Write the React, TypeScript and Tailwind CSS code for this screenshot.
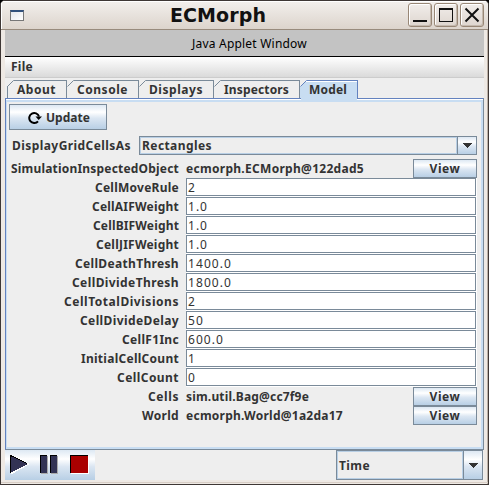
import { useLayoutEffect, useRef, useState } from "react";
import type { ReactNode } from "react";

const metal = "bg-[linear-gradient(to_bottom,#dde8f3_0%,#ffffff_30%,#dbe6f2_55%,#b8cfe5_100%)]";

/* Caption whose letter spacing is adjusted so that it fills a given width. */
function Caption({ text, width, className = "" }: { text: string; width: number; className?: string }) {
  const ref = useRef<HTMLSpanElement>(null);
  const [spacing, setSpacing] = useState(0);
  useLayoutEffect(() => {
    if (!ref.current) return;
    const natural = ref.current.getBoundingClientRect().width;
    setSpacing((width - natural) / text.length);
  }, [text, width]);
  return (
    <span ref={ref} style={{ letterSpacing: spacing }} className={`inline-block shrink-0 whitespace-pre ${className}`}>
      {text}
    </span>
  );
}

function WindowButton({ children }: { children: ReactNode }) {
  return (
    <div className="h-6 w-6 rounded-[3px] border border-[#988776] bg-gradient-to-b from-[#f1edea] to-[#ded6cf] shadow-[inset_1px_1px_0_#fff,inset_-1px_-1px_0_#c4b9ae]">
      <svg width="22" height="22" viewBox="0 0 22 22" fill="none" stroke="#111" shapeRendering="crispEdges">
        {children}
      </svg>
    </div>
  );
}

function Tab({ text, width, box, active = false }: { text: string; width: number; box: string; active?: boolean }) {
  return (
    <div
      className={`relative flex h-[18px] items-center border-t border-r ${box} ${
        active
          ? "border-[#6382bf] bg-[#c8ddf2] pl-[9px] shadow-[inset_0_1px_0_#fff]"
          : "border-[#7a8a99] pl-[10px]"
      }`}
    >
      <svg className="absolute -top-px left-0" width="7" height="18" viewBox="0 0 7 18">
        <path d="M0 0H7L0 7Z" fill="#eee" />
        <path d="M0.5 6.5L6.5 0.5" stroke={active ? "#6382bf" : "#7a8a99"} />
        {text === "About" && <path d="M0.5 6V18" stroke="#7a8a99" />}
      </svg>
      <Caption text={text} width={width} />
    </div>
  );
}

function Arrow() {
  return (
    <svg width="10" height="5" viewBox="0 0 10 5" shapeRendering="crispEdges">
      <path d="M0 0H10L5 5Z" fill="#333" />
    </svg>
  );
}

function Combo({ text, width, box }: { text: string; width: number; box: string }) {
  return (
    <div className={`flex border border-[#7a8a99] ${box}`}>
      <div className="flex grow items-center border border-[#b8cfe5] pl-[1px]">
        <Caption text={text} width={width} className="pt-px" />
      </div>
      <div className={`flex w-[19px] items-center justify-center border-l border-[#7a8a99] ${metal}`}>
        <Arrow />
      </div>
    </div>
  );
}

function ViewButton() {
  return (
    <div className={`flex h-[19px] w-16 items-center justify-center border border-[#7a8a99] ${metal}`}>
      <Caption text="View" width={31} />
    </div>
  );
}

function Row({ label, width, children }: { label: string; width: number; children: ReactNode }) {
  return (
    <div className="flex h-[19px] items-center">
      <div className="flex w-[173px] shrink-0 justify-end">
        <Caption text={label} width={width} />
      </div>
      <div className="ml-[7px] flex w-[291px] items-center justify-between">{children}</div>
    </div>
  );
}

const fields: [string, number, string, number][] = [
  ["CellMoveRule", 84, "2", 7],
  ["CellAIFWeight", 87, "1.0", 20],
  ["CellBIFWeight", 86, "1.0", 20],
  ["CellJIFWeight", 83, "1.0", 20],
  ["CellDeathThresh", 104, "1400.0", 44],
  ["CellDivideThresh", 107, "1800.0", 44],
  ["CellTotalDivisions", 115, "2", 7],
  ["CellDivideDelay", 99, "50", 16],
  ["CellF1Inc", 57, "600.0", 36],
  ["InitialCellCount", 98, "1", 7],
  ["CellCount", 62, "0", 7],
];

export default function App() {
  return (
    <div className="h-[485px] w-[489px] bg-black font-['Noto_Sans',sans-serif] text-[12px] leading-[16px] font-bold text-[#333]">
      <div className="flex h-full w-full flex-col overflow-hidden rounded-t-[5px] border border-[#3e3735] bg-[#eee9e4] shadow-[inset_-1px_0_0_#bcb0a5]">
        <div className="flex h-[29px] shrink-0 items-center border-b border-[#988b7d] bg-gradient-to-b from-[#f3f0ed] to-[#dcd4cc] shadow-[inset_1px_1px_0_#fff]">
          <div className="ml-[9px] h-[11px] w-[14px] border border-t-2 border-[#777] border-t-[#31517c] bg-gradient-to-br from-[#e5e8ec] to-white" />
          <div className="ml-[146px] grow font-['DejaVu_Sans',sans-serif] text-[19px] leading-[26px] text-[#111]">
            <Caption text="ECMorph" width={96} />
          </div>
          <div className="mr-[4px] flex gap-[2px]">
            <WindowButton>
              <path d="M4 17H18" strokeWidth="2" />
            </WindowButton>
            <WindowButton>
              <path d="M4.5 4V18M17.5 4V18M4 17.5H18" />
              <path d="M4 5H18" strokeWidth="2" />
            </WindowButton>
            <WindowButton>
              <path d="M4.5 4.5L17.5 17.5M17.5 4.5L4.5 17.5" strokeWidth="2" shapeRendering="auto" />
            </WindowButton>
          </div>
        </div>

        <div className="ml-1 flex h-[450px] w-[479px] flex-col bg-[#eee]">
          <div className="flex h-[27px] shrink-0 items-center border-b border-black bg-[#c3c3c3] pl-[187px] font-normal text-black">
            <Caption text="Java Applet Window" width={115} className="pt-px" />
          </div>
          <div className="flex h-[21px] shrink-0 items-center border-b border-[#ccc] bg-gradient-to-b from-white to-[#dadada] pl-[6px]">
            <Caption text="File" width={22} />
          </div>

          <div className="flex h-5 shrink-0 items-end pl-[2px]">
            <Tab text="About" width={39} box="w-[60px]" />
            <Tab text="Console" width={51} box="w-[72px]" />
            <Tab text="Displays" width={54} box="w-[75px]" />
            <Tab text="Inspectors" width={65} box="w-[86px]" />
            <Tab text="Model" width={38} box="w-[58px]" active />
          </div>

          <div className="relative h-[352px] shrink-0 border border-[#7a8a99] border-t-[#6382bf] border-l-[#6382bf]">
            <div className="absolute -top-px left-[295px] h-[2px] w-[56px] bg-[#c8ddf2]" />
            <div className="h-full border-t border-white">
              <div className="h-full border-2 border-l border-[#c8ddf2] pt-[2px] pl-[2px]">
                <div className={`flex h-[26px] w-[98px] items-center border border-[#7a8a99] pl-[18px] ${metal}`}>
                  <svg width="14" height="13" viewBox="0 0 14 13" fill="none">
                    <path d="M10 10.3A5 5 0 1 1 11 5.5" stroke="#000" strokeWidth="2" />
                    <path d="M7.5 5.5H14L10.7 9Z" fill="#000" />
                  </svg>
                  <Caption text="Update" width={44} className="ml-[4px] pt-px" />
                </div>
                <div className="mt-[6px] flex h-[19px] items-center">
                  <Caption text="DisplayGridCellsAs" width={119} className="ml-[3px]" />
                  <Combo text="Rectangles" width={70} box="ml-2 h-[19px] w-[338px]" />
                </div>
                <div className="mt-1 -ml-[3px]">
                  <Row label="SimulationInspectedObject" width={168}>
                    <Caption text="ecmorph.ECMorph@122dad5" width={178} />
                    <ViewButton />
                  </Row>
                  {fields.map(([label, width, value, valueWidth]) => (
                    <Row key={label} label={label} width={width}>
                      <div className="flex h-[19px] w-full items-center border-r border-b border-white">
                        <div className="flex h-[18px] w-full items-center border border-[#7a8a99] bg-white pt-[2px] pl-[1px] font-normal">
                          <Caption text={value} width={valueWidth} />
                        </div>
                      </div>
                    </Row>
                  ))}
                  <Row label="Cells" width={31}>
                    <Caption text="sim.util.Bag@cc7f9e" width={123} />
                    <ViewButton />
                  </Row>
                  <Row label="World" width={37}>
                    <Caption text="ecmorph.World@1a2da17" width={157} />
                    <ViewButton />
                  </Row>
                </div>
              </div>
            </div>
          </div>

          <div className="flex h-[30px] shrink-0 justify-between">
            <div className={`h-[30px] w-[90px] ${metal}`}>
              <svg width="90" height="30" viewBox="0 0 90 30" shapeRendering="crispEdges">
                <path d="M6 6L25 14L7 24H6Z" fill="#fff" />
                <path d="M5 5L23 14L5 23Z" fill="#333355" />
                <path d="M5.5 23V5.5L22 13.5" stroke="#000" fill="none" />
                <path d="M36 6H43V24H36ZM46 6H53V24H46Z" fill="#aaa" />
                <path d="M35 5H42V23H35ZM45 5H52V23H45Z" fill="#333355" />
                <path d="M35.5 23V5.5H42M45.5 23V5.5H52" stroke="#000" fill="none" />
                <path d="M66 6H84V24H66Z" fill="#fff" />
                <path d="M65 5H83V23H65Z" fill="#aa0000" />
                <path d="M65.5 23V5.5H83" stroke="#000" fill="none" />
              </svg>
            </div>
            <Combo text="Time" width={31} box="mr-px h-[30px] w-[147px]" />
          </div>
        </div>
        <div className="mt-[2px] h-px shrink-0 bg-[#d8cec6]" />
      </div>
    </div>
  );
}
